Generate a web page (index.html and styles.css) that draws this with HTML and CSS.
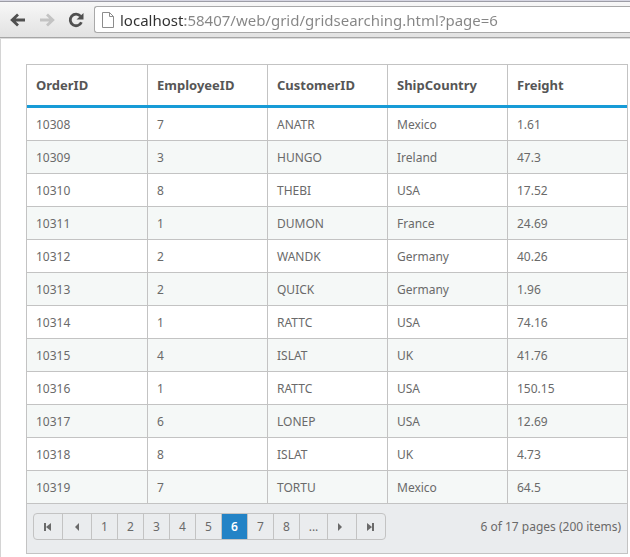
FILE: index.html
```
<!DOCTYPE html>
<html lang="en">
<head>
<meta charset="utf-8">
<title>Grid searching</title>
<link rel="stylesheet" href="styles.css">
</head>
<body>
<header class="toolbar">
  <nav class="nav" aria-label="History">
    <button type="button" aria-label="Back"><svg width="16" height="14" viewBox="0 0 16 14"><path d="M8 1.500 2.200 7 8 12.500M2.500 7H15" fill="none" stroke="#505050" stroke-width="2.800"/></svg></button>
    <button type="button" aria-label="Forward" disabled><svg width="16" height="14" viewBox="0 0 16 14"><path d="M8 1.500 13.800 7 8 12.500M13.500 7H1" fill="none" stroke="#c3c3c3" stroke-width="2.800"/></svg></button>
    <button type="button" aria-label="Reload"><svg width="16" height="16" viewBox="0 0 16 16"><path d="M12.500 4.200A5.800 5.800 0 1 0 13.400 10.200" fill="none" stroke="#505050" stroke-width="2.800"/><path d="M15.500 1V7.500H8.500Z" fill="#505050"/></svg></button>
  </nav>
  <div class="address">
    <svg width="12" height="16" viewBox="0 0 12 16"><path d="M.5.5H7.500L11.500 4.500V15.500H.5ZM7.500.5V4.500H11.500" fill="#fff" stroke="#8c8c8c"/></svg>
    <input class="url" type="text" aria-label="Address" spellcheck="false" value="localhost:58407/web/grid/gridsearching.html?page=6">
  </div>
</header>
<main class="page">
  <section class="grid">
    <table>
      <thead><tr><th>OrderID</th><th>EmployeeID</th><th>CustomerID</th><th>ShipCountry</th><th>Freight</th></tr></thead>
      <tbody>
        <tr><td>10308</td><td>7</td><td>ANATR</td><td>Mexico</td><td>1.61</td></tr>
        <tr><td>10309</td><td>3</td><td>HUNGO</td><td>Ireland</td><td>47.3</td></tr>
        <tr><td>10310</td><td>8</td><td>THEBI</td><td>USA</td><td>17.52</td></tr>
        <tr><td>10311</td><td>1</td><td>DUMON</td><td>France</td><td>24.69</td></tr>
        <tr><td>10312</td><td>2</td><td>WANDK</td><td>Germany</td><td>40.26</td></tr>
        <tr><td>10313</td><td>2</td><td>QUICK</td><td>Germany</td><td>1.96</td></tr>
        <tr><td>10314</td><td>1</td><td>RATTC</td><td>USA</td><td>74.16</td></tr>
        <tr><td>10315</td><td>4</td><td>ISLAT</td><td>UK</td><td>41.76</td></tr>
        <tr><td>10316</td><td>1</td><td>RATTC</td><td>USA</td><td>150.15</td></tr>
        <tr><td>10317</td><td>6</td><td>LONEP</td><td>USA</td><td>12.69</td></tr>
        <tr><td>10318</td><td>8</td><td>ISLAT</td><td>UK</td><td>4.73</td></tr>
        <tr><td>10319</td><td>7</td><td>TORTU</td><td>Mexico</td><td>64.5</td></tr>
      </tbody>
    </table>
    <footer class="pager">
      <nav class="pages" aria-label="Pages">
        <button type="button" class="step" aria-label="First page"><svg width="8" height="8" viewBox="0 0 8 8"><path d="M0 0H2V8H0ZM7 0V8L2 4Z"/></svg></button>
        <button type="button" class="step" aria-label="Previous page"><svg width="8" height="8" viewBox="0 0 8 8"><path d="M6 0V8L2 4Z"/></svg></button>
        <button type="button">1</button>
        <button type="button">2</button>
        <button type="button">3</button>
        <button type="button">4</button>
        <button type="button">5</button>
        <button type="button" class="current" aria-current="page">6</button>
        <button type="button">7</button>
        <button type="button">8</button>
        <button type="button" class="more">...</button>
        <button type="button" class="step" aria-label="Next page"><svg width="8" height="8" viewBox="0 0 8 8"><path d="M0 0V8L4 4Z"/></svg></button>
        <button type="button" class="step" aria-label="Last page"><svg width="8" height="8" viewBox="0 0 8 8"><path d="M5 0H7V8H5ZM0 0V8L5 4Z"/></svg></button>
      </nav>
      <span class="summary">6 of 17 pages (200 items)</span>
    </footer>
  </section>
</main>
</body>
</html>
```
FILE: styles.css
```
* {
  box-sizing: border-box;
}

body {
  margin: 0;
  min-height: 100vh;
  display: flex;
  flex-direction: column;
  background: #fff;
  color: #6a6a6a;
  font: 12px/16px "Noto Sans", "Open Sans", sans-serif;
}

button {
  margin: 0;
  padding: 0;
  border: 0;
  background: none;
  color: inherit;
  font: inherit;
}

svg {
  display: block;
}

.toolbar {
  display: flex;
  align-items: center;
  height: 38px;
  margin-bottom: 1px;
  padding: 1px 0 0 10px;
  border-top: 1px solid #d6d6e2;
  border-bottom: 1px solid #a6a6a6;
  background: linear-gradient(#f8f8f8, #e2e2e2);
  box-shadow: inset 0 1px #9d9da6, 0 1px #dcdcdc;
}

.nav {
  display: flex;
  align-items: center;
  gap: 13px;
  margin-right: 10px;
}

.address {
  flex: 1;
  display: flex;
  align-items: center;
  gap: 6px;
  height: 27px;
  padding-left: 7px;
  border: 1px solid #a9a9a9;
  border-right: 0;
  border-radius: 3px 0 0 3px;
  background: #fff;
}

.url {
  flex: 1;
  min-width: 0;
  padding: 0;
  border: 0;
  outline: 0;
  background: linear-gradient(90deg, #303030 65px, #858585 65px);
  background-clip: text;
  -webkit-background-clip: text;
  color: transparent;
  font: 15px/22px "Noto Sans", "Open Sans", sans-serif;
}

.page {
  flex: 1;
  padding: 25px 2px 0 25px;
  border-left: 1px solid #d4d4d4;
}

.grid {
  border: 1px solid #c3c3c3;
}

table {
  width: 100%;
  table-layout: fixed;
  border-collapse: separate;
  border-spacing: 0;
}

th,
td {
  padding: 0 9px 0 10px;
  text-align: left;
}

/* Header dividers are backgrounds so the accent bar stays unbroken. */
th {
  height: 43px;
  background: linear-gradient(#c3c3c3, #c3c3c3) 0 0 / 1px 100% no-repeat;
  border-bottom: 3px solid #179bd7;
  color: #565656;
  font-weight: 700;
  font-size: 13px;
}

td {
  height: 33px;
  padding-top: 1px;
  border-left: 1px solid #c3c3c3;
  border-bottom: 1px solid #c3c3c3;
}

td:not(:first-child) {
  padding-left: 9px;
}

th:first-child,
td:first-child {
  padding-left: 9px;
  border-left: 0;
  background-image: none;
}

tbody tr:nth-child(even) {
  background: #f5f8f7;
}

.pager {
  display: flex;
  align-items: center;
  justify-content: space-between;
  padding: 9px 6px 13px;
  background: #eaecee;
}

.pages {
  display: flex;
  height: 27px;
  border: 1px solid #c3c3c3;
  border-radius: 4px;
}

.pages button {
  display: flex;
  align-items: center;
  justify-content: center;
  width: 26px;
  border-left: 1px solid #c3c3c3;
}

.pages .step {
  width: 29px;
}

.pages .step:first-child {
  width: 28px;
  border-left: 0;
}

.pages .more {
  width: 28px;
}

.pages svg {
  fill: #6a6a6a;
}

.pages .current {
  background: #2383c6;
  background-clip: padding-box;
  color: #fff;
  font-weight: 600;
}
```
